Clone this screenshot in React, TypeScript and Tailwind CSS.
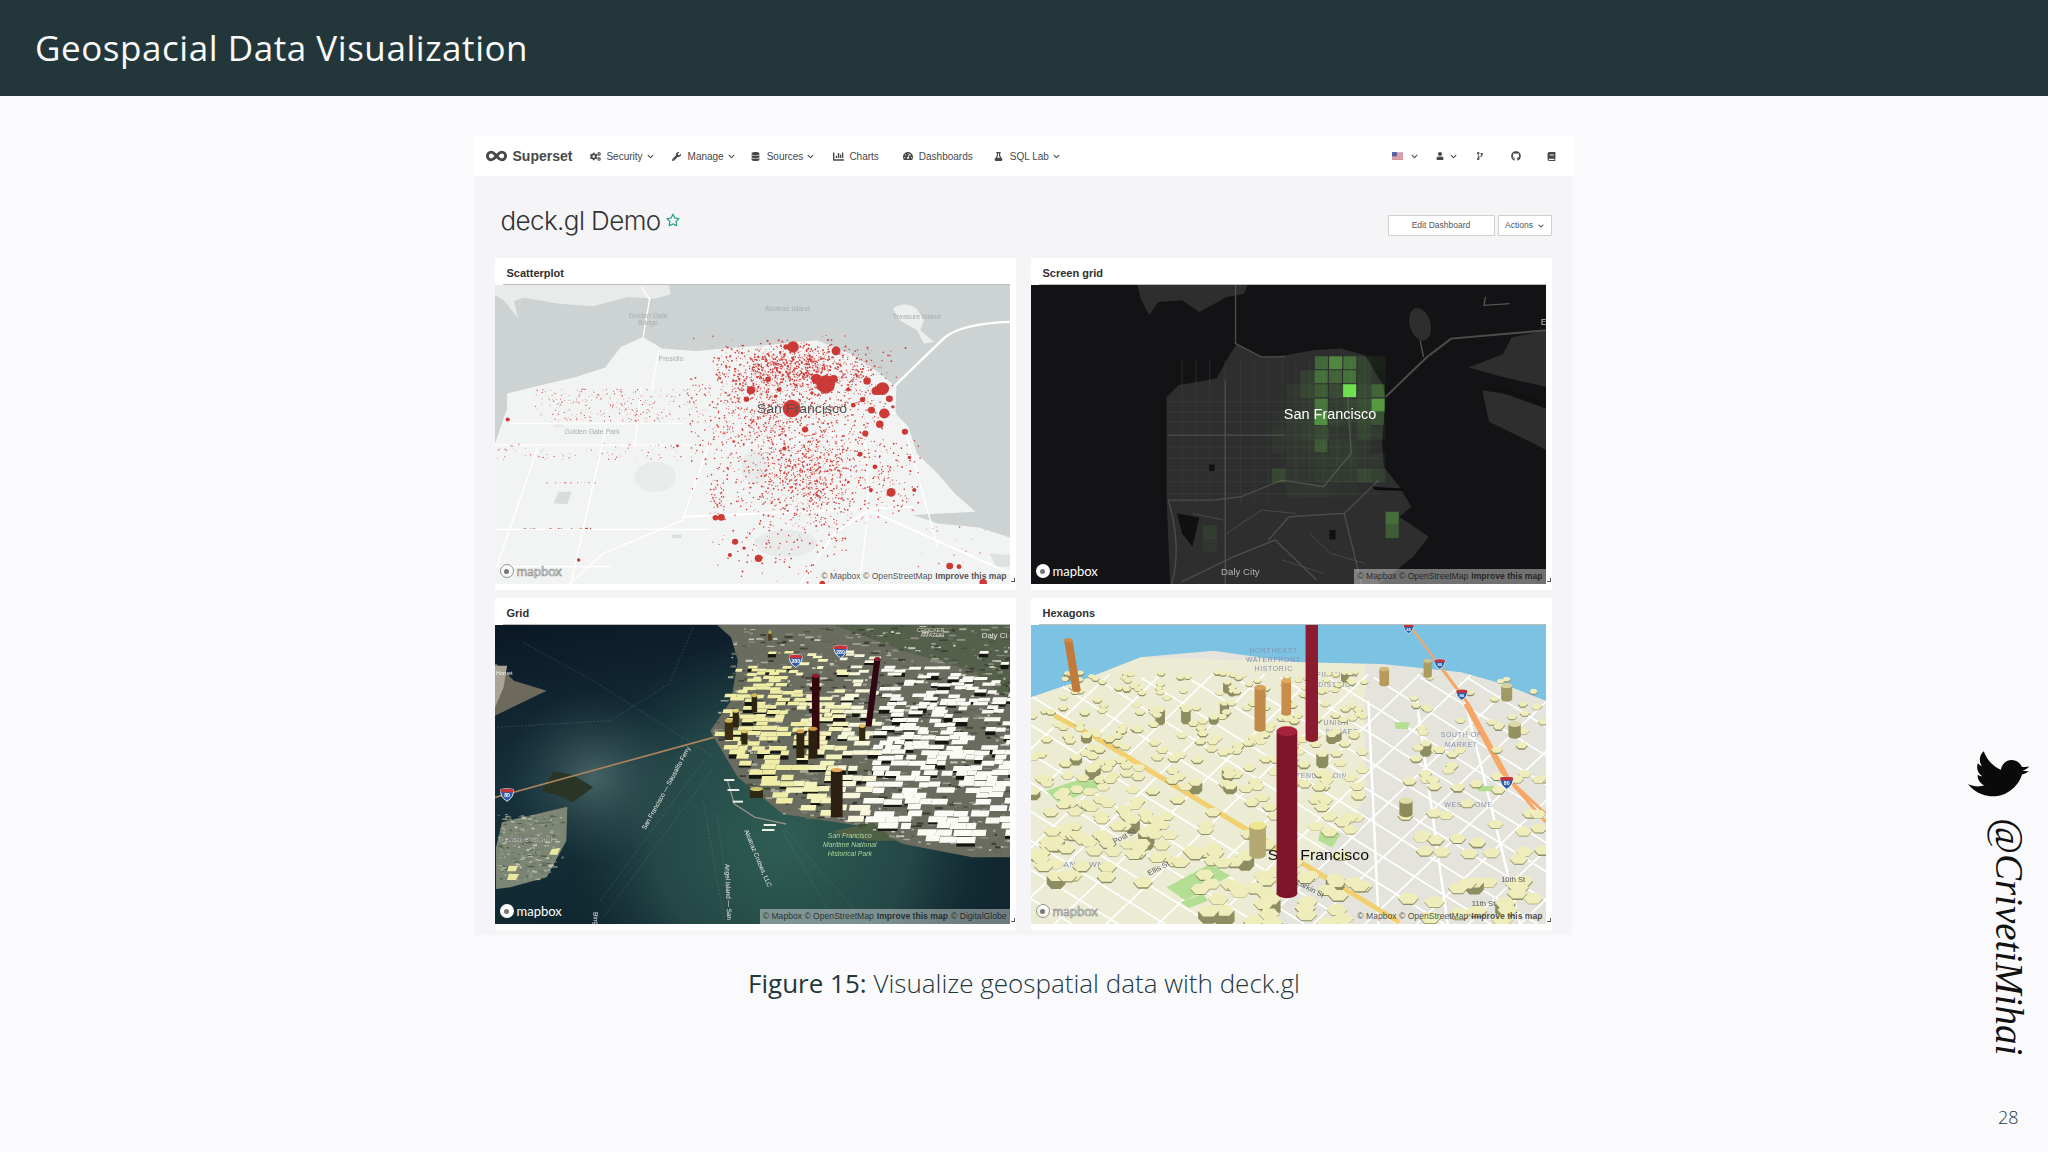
import type { ReactNode } from 'react'
import {
    FaBook,
    FaChartBar,
    FaChevronDown,
    FaCodeBranch,
    FaCogs,
    FaDatabase,
    FaFlask,
    FaGithub,
    FaRegStar,
    FaTachometerAlt,
    FaTwitter,
    FaUser,
    FaWrench,
} from 'react-icons/fa'

// small seeded random so the maps draw the same every time
function makeRng(seed: number) {
    let a = seed
    return () => {
        a = (a + 0x6d2b79f5) | 0
        let t = Math.imul(a ^ (a >>> 15), 1 | a)
        t = (t + Math.imul(t ^ (t >>> 7), 61 | t)) ^ t
        return ((t ^ (t >>> 14)) >>> 0) / 4294967296
    }
}

function gauss(r: () => number) {
    return (r() + r() + r() + r() - 2) / 0.58
}

type Dot = { x: number; y: number; r: number }

const scatterDots: Dot[] = (() => {
    const r = makeRng(7)
    const dots: Dot[] = []
    const add = (x: number, y: number, size = 1) => dots.push({ x, y, r: (1.1 + r() * 1.7) * size })
    for (let i = 0; i < 1500; i++) {
        const x = 860 + gauss(r) * 170
        const y = 400 + gauss(r) * 120
        if (y > 195 && x < 1170 && x > 580 && !(x < 660 && y < 280)) add(x, y)
    }
    for (let i = 0; i < 800; i++) add(880 + gauss(r) * 110, 270 + gauss(r) * 38, 1.1)
    for (let i = 0; i < 650; i++) add(930 + gauss(r) * 90, 610 + gauss(r) * 65)
    for (let i = 0; i < 140; i++) add(850 + gauss(r) * 100, 780 + gauss(r) * 70)
    for (let i = 0; i < 300; i++) add(130 + r() * 470, 325 + r() * 100, 0.7)
    for (let i = 0; i < 80; i++) add(20 + r() * 560, 490 + r() * 50, 0.7)
    for (let i = 0; i < 24; i++) add(95 + r() * 210, 745, 0.7)
    for (let i = 0; i < 14; i++) add(150 + r() * 170, 608, 0.7)
    for (let i = 0; i < 90; i++) add(1120 + r() * 130, 480 + r() * 220)
    for (let i = 0; i < 50; i++) add(640 + r() * 40, 600 + r() * 120)
    for (let i = 0; i < 18; i++) add(1240 + r() * 200, 740 + r() * 150, 0.8)
    return dots
})()

const scatterBlobs = [
    [880, 200, 17], [860, 200, 8], [1005, 212, 13], [975, 312, 27], [948, 296, 15], [998, 296, 12], [876, 385, 26],
    [1095, 302, 11], [1140, 325, 19], [1120, 332, 12], [1145, 400, 15], [1108, 390, 10], [1160, 356, 10],
    [1132, 432, 11], [1082, 358, 8], [758, 330, 12], [745, 357, 8], [808, 297, 8], [915, 448, 9], [1090, 460, 9],
    [1205, 455, 9], [1075, 522, 7], [1118, 560, 7], [1165, 637, 13], [1106, 630, 6], [655, 713, 8], [672, 712, 10],
    [712, 785, 9], [738, 804, 5], [697, 825, 6], [780, 835, 11], [1335, 858, 10], [1362, 860, 7], [1432, 908, 11],
    [965, 910, 8], [258, 840, 5], [52, 418, 6], [545, 497, 4], [708, 484, 4], [855, 505, 6], [1232, 630, 6], [1218, 532, 5],
    [840, 328, 7], [1040, 328, 6], [935, 338, 5], [830, 348, 5], [1055, 375, 7], [1130, 335, 9], [1170, 380, 5],
]

function ScatterMap() {
    return (
        <svg viewBox="15 14 1495 898" preserveAspectRatio="none" className="block h-full w-full blur-[0.4px]">
            <rect x="15" y="14" width="1495" height="898" fill="#cdd2d2" />
            <path
                d="M15 912V490L50 385V340L120 322 250 290 335 262 380 200 445 170 500 205 600 212 680 205 800 195 950 180 1050 222 1120 270 1180 320 1178 400 1215 440 1240 520 1300 580 1350 640 1410 695 1230 705 1300 730 1420 742 1510 772V912Z"
                fill="#f2f3f3"
            />
            <path d="M15 14H520L525 42 480 55 400 50 300 78 200 70 100 52 70 62 82 112 40 60 15 45Z" fill="#e9ebeb" />
            <path d="M1170 85Q1200 60 1240 85L1260 120 1250 150 1290 185 1260 190 1240 150 1190 120Z" fill="#edefef" />
            <path d="M1450 820 1510 825V860L1470 860Z" fill="#dfe2e2" />
            <g fill="#e9eaea">
                <path d="M185 670 200 635H238L225 672Z" fill="#d9dcdc" />
                <rect x="185" y="432" width="30" height="10" />
                <ellipse cx="480" cy="590" rx="60" ry="45" />
                <ellipse cx="860" cy="790" rx="90" ry="40" />
                <ellipse cx="770" cy="560" rx="40" ry="50" />
                <rect x="530" y="764" width="26" height="10" fill="#dadddd" />
            </g>
            <g stroke="#ffffff" fill="none" strokeWidth="4">
                <path d="M445 170 465 50M440 20 465 60" />
                <path d="M1172 320 1320 172Q1370 130 1510 125" strokeWidth="7" />
                <path d="M15 495H580M60 430 560 430M15 748H640M15 860H350" />
                <path d="M340 430 235 912M140 500 20 860M440 320 420 500M490 210 470 330" />
                <path d="M1090 480Q1110 700 1070 912M1200 430 1300 800M640 480 560 720 330 820 230 912" />
                <path d="M560 710 1230 680M900 912 1000 760 1100 690M1100 690 1510 880" strokeWidth="6" />
                <path d="M660 300 1180 400M700 500 1080 450" strokeWidth="3" />
            </g>
            {scatterDots.map((d, i) => (
                <circle key={i} cx={d.x} cy={d.y} r={d.r} fill="#d0403c" />
            ))}
            {scatterBlobs.map(([x, y, r], i) => (
                <circle key={i} cx={x} cy={y} r={r} fill="#cb3a36" />
            ))}
            <text x="775" y="398" fontSize="41" fill="#4f5556">San Francisco</text>
            <g fill="#a8adad" fontSize="20">
                <text x="217" y="463">Golden Gate Park</text>
                <text x="490" y="243">Presidio</text>
                <text x="798" y="93">Alcatraz Island</text>
                <text x="1170" y="115">Treasure Island</text>
                <text x="403" y="112">Golden Gate</text>
                <text x="430" y="135">Bridge</text>
            </g>
        </svg>
    )
}

// opacity of each cell, one row per entry: [y, first x, ...values]
const screenCells: number[][] = [
    [228, 855, 0.32, 0.5, 0.38, 0.12, 0.07],
    [270, 813, 0.1, 0.38, 0.3, 0.38, 0.12, 0.05],
    [312, 772, 0.05, 0.14, 0.26, 0.16, 1, 0.16, 0.3],
    [355, 772, 0.04, 0.07, 0.4, 0.08, 0.12, 0.18, 0.6],
    [396, 730, 0.03, 0.07, 0.09, 0.55, 0.1, 0.08, 0.14, 0.2],
    [437, 730, 0.05, 0.07, 0.1, 0.16, 0.05, 0.05, 0.13, 0.07],
    [478, 730, 0.04, 0.06, 0.07, 0.24, 0.08, 0.07, 0.05],
    [520, 772, 0.06, 0.06, 0.08, 0.08, 0.08, 0.06, 0.06],
    [565, 730, 0.14, 0.06, 0.05, 0.08, 0.08, 0.08, 0.14, 0.1],
    [610, 772, 0.04, 0.05, 0.05, 0.03, 0.03],
    [695, 1060, 0.36],
    [735, 1060, 0.26],
    [735, 530, 0.08],
    [775, 530, 0.05],
]

function ScreenGridMap() {
    const across = [365, 395, 425, 465, 500, 535, 570, 605, 640]
    const down = [470, 510, 550, 595, 640, 680, 720, 760, 800, 840, 880, 920, 960, 1000]
    return (
        <svg viewBox="32 14 1493 898" preserveAspectRatio="none" className="block h-full w-full blur-[0.4px]">
            <rect x="32" y="14" width="1493" height="898" fill="#131315" />
            <g fill="#2e2e2f">
                <path d="M435 912 425 650V350L460 315 570 295 610 220 630 190 700 230 770 225 850 210 930 205 1000 225 1050 310 1060 350 1050 480 1055 560 1100 620 1135 680 1100 710 1185 770 1140 830 1080 880 1040 912Z" />
                <path d="M340 14H660L650 40 600 50 520 95 470 60 400 65 375 105 350 55Z" />
                <ellipse cx="1160" cy="132" rx="30" ry="50" transform="rotate(-15 1160 132)" />
                <path d="M1300 262 1400 222 1425 172 1525 150V510L1490 490 1360 425 1340 330 1430 345 1525 380V320L1400 290Z" />
            </g>
            <g stroke="#414142" strokeWidth="1.6" fill="none">
                {across.map(y => (
                    <path key={y} d={`M430 ${y}H1045`} />
                ))}
                {down.map(x => (
                    <path key={x} d={`M${x} 240V${x < 760 ? 680 : 610}`} />
                ))}
                <g strokeWidth="4" stroke="#4d4d4e">
                    <path d="M625 14V190L700 230 770 230M430 465H770M595 300V912" />
                    <path d="M1060 350 1180 230 1250 175 1420 160 1525 150" strokeWidth="6" />
                    <path d="M430 660H560L640 650 760 600 880 620 960 520 950 350" />
                    <path d="M430 660Q470 800 440 912M940 700 990 912M470 905 620 830 740 780 860 900M720 780 780 710 940 700 1040 600" />
                    <path d="M600 760 700 690 800 700M840 760 900 820 1000 850M500 700 590 720M760 840 880 880" strokeWidth="2.5" />
                </g>
                <path d="M1350 50 1345 75 1420 70M1160 180 1170 230" strokeWidth="4" stroke="#555" />
            </g>
            <path d="M455 700 520 712 500 800 470 760Z" fill="#101011" />
            <rect x="897" y="750" width="18" height="28" fill="#111" />
            <rect x="548" y="553" width="16" height="20" fill="#111" />
            <path d="M1020 620 1110 625 1110 632 1030 630Z" fill="#0c0c0d" />
            <path d="M1350 305 1525 370V385L1350 320Z" fill="#111" />
            {screenCells.flatMap(([y, x, ...cells]) =>
                cells.map((o, i) => (
                    <rect
                        key={`${y}-${i}`}
                        x={x + i * 41.2}
                        y={y}
                        width={o < 0.2 ? 41.2 : 38}
                        height={o < 0.2 ? 42 : 39}
                        fill="#6fe04f"
                        opacity={o}
                    />
                )),
            )}
            <text x="765" y="416" fontSize="42" fill="#ffffff">San Francisco</text>
            <text x="583" y="885" fontSize="28" fill="#b4b4b4">Daly City</text>
            <text x="1510" y="135" fontSize="28" fill="#b4b4b4">E</text>
        </svg>
    )
}

function Shield({ x, y, label, size = 1 }: { x: number; y: number; label: string; size?: number }) {
    return (
        <g transform={`translate(${x} ${y}) scale(${size})`}>
            <path d="M-18-16Q0-20 18-16 22 6 0 20-22 6-18-16Z" fill="#2c5ea8" stroke="#fff" strokeWidth="2.5" />
            <path d="M-18-16Q0-20 18-16L19-7H-19Z" fill="#c8323a" />
            <text x="0" y="8" textAnchor="middle" fontSize="15" fontWeight="700" fill="#fff">{label}</text>
        </g>
    )
}

// coast of the city in the satellite map
function coastY(x: number) {
    if (x < 720) return 410 + (x - 650) * 1.7
    if (x < 850) return 530 + (x - 720) * 0.85
    if (x < 1100) return 640 + (x - 850) * 0.16
    if (x < 1200) return 680 + (x - 1100) * 0.5
    return 730 + (x - 1200) * 0.1
}

function leftY(y: number) {
    return y < 400 ? 710 - (y - 110) * 0.22 : 650 + (y - 400) * 0.6
}

type Cell = { x: number; y: number; w: number; h: number; side: number; fill: string }

const satelliteCells: Cell[] = (() => {
    const r = makeRng(21)
    const cells: Cell[] = []
    let y = 150
    while (y < 765) {
        const t = (y - 110) / 640
        const h = 7 + t * 13
        const w = 22 + t * 20
        let x = leftY(y) + r() * w
        while (x < 1510) {
            const cw = w * (0.7 + r() * 0.9)
            // fewer cells higher up the hill and far to the right
            let keep = y < 190 ? 0.16 : y < 260 ? 0.36 : 0.62
            if (x > 1350 && y < 420) keep *= 0.55
            if (y + h < coastY(x) && r() < keep) {
                const warm = Math.min(1, (x - 660) / 560 + (y > 540 ? 0.05 : 0))
                const fill = warm < 0.4 ? '#efeda6' : warm < 0.62 ? '#f5f3bd' : warm < 0.8 ? '#f8f7dc' : '#fbfbf6'
                cells.push({
                    x,
                    y: y + (r() - 0.5) * 6,
                    w: cw,
                    h,
                    side: r() < 0.3 ? 5 + r() * 9 : 0,
                    fill,
                })
            }
            x += cw + (r() < 0.3 ? r() * w * 0.5 : 0)
        }
        y += h + 1
    }
    return cells
})()

// rough satellite texture under the cells
const satelliteSpecks = (() => {
    const r = makeRng(33)
    const tones = ['#3a3b34', '#8a8b80', '#6e7064', '#a9a99c', '#404a36', '#5e6a54', '#c7c6ba']
    const islandTones = ['#8d9482', '#a5aa9a', '#6f7a66', '#c2c4b6', '#545f4e']
    const list: { x: number; y: number; w: number; h: number; fill: string }[] = []
    for (let i = 0; i < 1400; i++) {
        const x = 640 + r() * 870
        const y = 75 + r() * 700
        if (y < coastY(x) && x > leftY(y)) {
            list.push({ x, y, w: 4 + r() * 22, h: 2 + r() * 5, fill: tones[Math.floor(r() * tones.length)] })
        }
    }
    for (let i = 0; i < 260; i++) {
        const x = 22 + r() * 190
        const y = 640 + r() * 200
        if (y < 860 - (x > 100 ? (x - 100) * 0.7 : 0)) {
            list.push({ x, y, w: 3 + r() * 12, h: 2 + r() * 4, fill: islandTones[Math.floor(r() * islandTones.length)] })
        }
    }
    return list
})()

const gridColumns = [
    { x: 935, top: 225, bottom: 445, w: 22, lean: 0, body: '#34070f', cap: '#8c1c2d' },
    { x: 1090, top: 175, bottom: 378, w: 18, lean: -26, body: '#2e0811', cap: '#8c1c2d' },
    { x: 990, top: 508, bottom: 650, w: 34, lean: 0, body: '#2d2012', cap: '#e7a95c' },
    { x: 890, top: 392, bottom: 472, w: 23, lean: 0, body: '#30260f', cap: '#d6a44e' },
    { x: 925, top: 384, bottom: 474, w: 26, lean: 0, body: '#2c2010', cap: '#cf953f' },
    { x: 1072, top: 375, bottom: 420, w: 18, lean: 0, body: '#33290f', cap: '#e1c561' },
    { x: 682, top: 360, bottom: 418, w: 24, lean: 0, body: '#3a2e13', cap: '#cfb055' },
    { x: 730, top: 392, bottom: 432, w: 18, lean: 0, body: '#2f2610', cap: '#dfc86b' },
    { x: 760, top: 284, bottom: 335, w: 16, lean: 0, body: '#2f2610', cap: '#d3bb5b' },
    { x: 705, top: 330, bottom: 380, w: 18, lean: 0, body: '#2f2610', cap: '#e5d874' },
    { x: 808, top: 95, bottom: 120, w: 10, lean: 0, body: '#4a3d1a', cap: '#b8a253' },
    { x: 755, top: 565, bottom: 592, w: 38, lean: 0, body: '#2d2a14', cap: '#cfc56b' },
]

function GridMap() {
    return (
        <svg viewBox="15 73 1495 897" preserveAspectRatio="none" className="block h-full w-full blur-[0.4px]">
            <defs>
                <radialGradient id="seaGlow" gradientUnits="userSpaceOnUse" cx="850" cy="720" r="620">
                    <stop offset="0" stopColor="#2f5e54" />
                    <stop offset="0.6" stopColor="#2a4f4c" stopOpacity="0.8" />
                    <stop offset="1" stopColor="#1c3a3f" stopOpacity="0" />
                </radialGradient>
                <radialGradient id="seaHaze" gradientUnits="userSpaceOnUse" cx="300" cy="530" r="260">
                    <stop offset="0" stopColor="#6d8a86" stopOpacity="0.55" />
                    <stop offset="1" stopColor="#3a5a5a" stopOpacity="0" />
                </radialGradient>
                <linearGradient id="seaDeep" x1="0" y1="0" x2="0.3" y2="1">
                    <stop offset="0" stopColor="#0b1826" />
                    <stop offset="0.5" stopColor="#15303a" />
                    <stop offset="1" stopColor="#10272f" />
                </linearGradient>
            </defs>
            <rect x="15" y="73" width="1495" height="897" fill="url(#seaDeep)" />
            <rect x="15" y="73" width="1495" height="897" fill="url(#seaGlow)" />
            <rect x="15" y="73" width="1495" height="897" fill="url(#seaHaze)" />
            <path d="M15 345 165 270 70 240 20 190H15Z" fill="#6d6a5c" />
            <path d="M15 195H50L40 260 15 320Z" fill="#a9a596" />
            <path d="M150 570 185 512 240 522 300 560 240 605 200 585Z" fill="#2a3427" />
            <path d="M18 740 35 665 225 618 222 720 165 830 60 860 18 865Z" fill="#7d8675" />
            <path d="M660 73H1510V770L1400 770 1200 730 1100 680 850 640 720 530 650 410 640 390 700 300 720 180 700 110Z" fill="#6a6c60" />
            <path d="M1000 73H1510V300L1400 210 1200 150Z" fill="#55604a" />
            <path d="M1000 690 1110 665 1180 720 1100 720 1000 700Z" fill="#4e5f45" />
            {satelliteSpecks.map((s, i) => (
                <rect key={i} x={s.x} y={s.y} width={s.w} height={s.h} fill={s.fill} />
            ))}
            <path d="M15 590 650 410" stroke="#a9825e" strokeWidth="5" />
            <g stroke="#7ba096" strokeWidth="1.2" strokeDasharray="5 5" fill="none" opacity="0.7">
                <path d="M95 125 300 240 650 470" />
                <path d="M590 80 520 250 350 360 20 380" />
                <path d="M620 480 320 900M650 500 330 950" />
                <path d="M660 640 700 960M620 600 680 960" />
                <path d="M860 690 1060 930M850 690 1000 960" />
            </g>
            <path d="M690 540 710 610 770 650 860 670" fill="none" stroke="#8f8f88" strokeWidth="4" />
            <g fill="#e8efe6">
                <rect x="680" y="535" width="30" height="6" />
                <rect x="690" y="565" width="34" height="6" />
                <rect x="705" y="600" width="30" height="6" />
                <rect x="795" y="670" width="36" height="6" />
                <rect x="790" y="685" width="36" height="6" />
            </g>
            {satelliteCells.map((c, i) => (
                <g key={i}>
                    {c.side > 0 && (
                        <path
                            d={`M${c.x} ${c.y + c.h}H${c.x + c.w}V${c.y + c.h + c.side}H${c.x}Z`}
                            fill="#161610"
                        />
                    )}
                    <path d={`M${c.x + 3} ${c.y}H${c.x + c.w + 3}L${c.x + c.w} ${c.y + c.h}H${c.x}Z`} fill={c.fill} />
                </g>
            ))}
            <g fill="#e9e7a0">
                <path d="M180 745 205 742 195 762 172 762Z" />
                <path d="M55 795 82 795 75 812 50 812Z" />
                <path d="M55 820 85 820 76 838 50 838Z" />
            </g>
            {gridColumns.map((c, i) => (
                <g key={i}>
                    <path
                        d={`M${c.x} ${c.bottom}H${c.x + c.w}L${c.x + c.w - c.lean} ${c.top}H${c.x - c.lean}Z`}
                        fill={c.body}
                    />
                    <ellipse cx={c.x - c.lean + c.w / 2} cy={c.top} rx={c.w / 2} ry="6" fill={c.cap} />
                </g>
            ))}
            <Shield x={50} y={582} label="80" />
            <Shield x={888} y={180} label="280" />
            <Shield x={1018} y={152} label="280" />
            <g fontSize="23">
                <text x="22" y="723" fill="#e6e8df" stroke="#333" strokeWidth="0.6">Treasure Island</text>
                <text x="1428" y="112" fill="#e6e6dd">Daly Ci</text>
                <text x="1240" y="95" fontSize="16" fill="#d7d7cb">CROCKER</text>
                <text x="1250" y="110" fontSize="16" fill="#d7d7cb">AMAZON</text>
                <text x="18" y="222" fontSize="16" fill="#f4f4ec">Hornet</text>
                <text x="1045" y="712" textAnchor="middle" fill="#a9d69a" fontStyle="italic" fontSize="20">San Francisco</text>
                <text x="1045" y="739" textAnchor="middle" fill="#a9d69a" fontStyle="italic" fontSize="20">Maritime National</text>
                <text x="1045" y="766" textAnchor="middle" fill="#a9d69a" fontStyle="italic" fontSize="20">Historical Park</text>
            </g>
            <g fontSize="19" fill="#f0f0ea">
                <text transform="translate(452 688) rotate(-62)">San Francisco — Sausalito Ferry</text>
                <text transform="translate(738 690) rotate(68)">Alcatraz Cruises, LLC</text>
                <text transform="translate(683 790) rotate(88)">Angel Island — San</text>
                <text transform="translate(300 935) rotate(86)">Bing</text>
            </g>
        </svg>
    )
}

type Hex = { x: number; y: number; r: number; h: number }

const hexes: Hex[] = (() => {
    const r = makeRng(5)
    const list: Hex[] = []
    for (let i = 0; i < 900 && list.length < 470; i++) {
        const x = 32 + r() * 1493
        const y = 215 + Math.pow(r(), 1.3) * 755
        if (x > 1010 && y > 560 && r() < 0.45) continue
        if (x > 1040 && y < 520 && r() < 0.55) continue
        if (x > 1000 && x < 1100) continue
        if (x < 330 && y > 830) continue
        if (y < 320 && x < 120) continue
        const size = 11 + ((y - 215) / 755) * 20
        const tall = r()
        list.push({ x, y, r: size, h: tall > 0.93 ? 14 + r() * 26 : 1 + r() * 4 })
    }
    return list.sort((a, b) => a.y - b.y)
})()

function hexTop(x: number, y: number, r: number) {
    const ry = r * 0.55
    return `M${x - r} ${y}L${x - r / 2} ${y - ry}H${x + r / 2}L${x + r} ${y}L${x + r / 2} ${y + ry}H${x - r / 2}Z`
}

function hexSide(x: number, y: number, r: number, h: number) {
    const ry = r * 0.55
    return `M${x - r} ${y}V${y + h}L${x - r / 2} ${y + ry + h}H${x + r / 2}L${x + r} ${y + h}V${y}Z`
}

const hexColumns = [
    { x: 152, w: 24, top: 118, bottom: 268, lean: 24, body: '#bf7a3c', cap: '#d08a4a' },
    { x: 680, w: 32, top: 260, bottom: 385, lean: 0, body: '#c08a4a', cap: '#d7a25d' },
    { x: 758, w: 28, top: 240, bottom: 338, lean: 0, body: '#c88d4a', cap: '#dfaa5f' },
    { x: 1042, w: 28, top: 205, bottom: 250, lean: 0, body: '#b59a5a', cap: '#d0b978' },
    { x: 1170, w: 24, top: 180, bottom: 225, lean: 0, body: '#a99d62', cap: '#cfc58c' },
    { x: 1395, w: 32, top: 255, bottom: 295, lean: 0, body: '#a09a66', cap: '#d8d49e' },
    { x: 1416, w: 36, top: 370, bottom: 405, lean: 0, body: '#96925f', cap: '#dcd9a4' },
    { x: 1100, w: 38, top: 600, bottom: 640, lean: 0, body: '#8d8b5c', cap: '#e1deaa' },
    { x: 665, w: 48, top: 675, bottom: 762, lean: 0, body: '#b3a871', cap: '#f0e690' },
    { x: 828, w: 36, top: 70, bottom: 415, lean: 0, body: '#8b1c30', cap: '#8b1c30' },
    { x: 744, w: 60, top: 392, bottom: 878, lean: 0, body: '#7d1528', cap: '#a8213a' },
]

function HexMap() {
    const streets: number[] = []
    for (let x = -1000; x < 1500; x += 135) streets.push(x)
    const cross: number[] = []
    for (let x = -500; x < 1600; x += 150) cross.push(x)
    return (
        <svg viewBox="32 73 1493 897" preserveAspectRatio="none" className="block h-full w-full blur-[0.4px]">
            <defs>
                <clipPath id="hexland">
                    <path d="M32 290 190 235 350 170 560 150 800 185 1050 190 1280 215 1400 250 1525 300V970H32Z" />
                </clipPath>
            </defs>
            <rect x="32" y="73" width="1493" height="897" fill="#7cc3e3" />
            <g clipPath="url(#hexland)">
                <rect x="32" y="100" width="1493" height="870" fill="#e4e4dc" />
                <path d="M32 290 350 170 1000 190 1000 600 700 970H32Z" fill="#ecebd3" />
                <g stroke="#ffffff" strokeWidth="5" fill="none">
                    {streets.map(x => (
                        <path key={x} d={`M${x} 230 ${x + 1150} 970`} />
                    ))}
                    {cross.map(x => (
                        <path key={x} d={`M${x} 970 ${x + 760} 220`} />
                    ))}
                    <path d="M1010 300 1040 970M1150 300 1240 970M1290 300 1450 970" strokeWidth="7" />
                </g>
                <g fill="#b5de95">
                    <path d="M75 570 190 530 235 555 115 610Z" />
                    <path d="M425 860 550 790 610 825 480 900Z" />
                    <path d="M465 905 530 880 545 900 490 922Z" />
                    <path d="M1085 365H1130L1125 385H1090Z" />
                    <path d="M1320 556H1395L1398 572H1330Z" />
                    <path d="M870 690 930 700 905 740 865 720Z" />
                </g>
                <path d="M100 345 210 405 1100 965" stroke="#f2cf6f" strokeWidth="15" fill="none" />
                <path d="M1130 75 1300 310 1420 540 1525 665M1290 310 1400 520 1525 640" stroke="#f6a766" strokeWidth="9" fill="none" />
            </g>
            <path d="M1130 75 1300 310" stroke="#f6a766" strokeWidth="6" />
            <g fill="#8991ae" fontSize="20" letterSpacing="2">
                <text x="665" y="157">NORTHEAST</text>
                <text x="655" y="184">WATERFRONT</text>
                <text x="680" y="210">HISTORIC</text>
                <text x="860" y="230">FINANCIAL</text>
                <text x="865" y="258">DISTRICT</text>
                <text x="880" y="372">UNION</text>
                <text x="885" y="400">SQUARE</text>
                <text x="1220" y="408">SOUTH OF</text>
                <text x="1232" y="438">MARKET</text>
                <text x="800" y="532">TENDERLOIN</text>
                <text x="1230" y="618">WEST COME</text>
                <text x="78" y="798" fontSize="24">JAPANTOWN</text>
            </g>
            {hexes.map((h, i) => (
                <g key={i}>
                    <path d={hexSide(h.x, h.y, h.r, h.h)} fill="#8d8d62" />
                    <path d={hexTop(h.x, h.y, h.r)} fill="#efedbb" />
                </g>
            ))}
            <g fill="#555" fontSize="22">
                <text transform="translate(275 730) rotate(-28)">Post St</text>
                <text transform="translate(375 825) rotate(-28)">Ellis St</text>
                <text x="1395" y="845">10th St</text>
                <text x="1310" y="915">11th St</text>
                <text transform="translate(800 850) rotate(28)">Larkin St</text>
            </g>
            <Shield x={1127} y={84} label="80" size={0.75} />
            <Shield x={1217} y={190} label="80" size={0.8} />
            <Shield x={1281} y={282} label="80" size={0.85} />
            <Shield x={1411} y={546} label="80" size={1} />
            <text x="718" y="777" fontSize="46" fill="#0c0c0c">San Francisco</text>
            {hexColumns.map((c, i) => (
                <g key={i}>
                    <path
                        d={`M${c.x} ${c.bottom}H${c.x + c.w}L${c.x + c.w - c.lean} ${c.top}H${c.x - c.lean}Z`}
                        fill={c.body}
                    />
                    <ellipse cx={c.x + c.w / 2} cy={c.bottom} rx={c.w / 2} ry={c.w / 4} fill={c.body} />
                    <ellipse cx={c.x - c.lean + c.w / 2} cy={c.top} rx={c.w / 2} ry={c.w / 4} fill={c.cap} />
                </g>
            ))}
        </svg>
    )
}

function MapboxLogo({ outlined }: { outlined?: boolean }) {
    return (
        <div className="absolute bottom-[6px] left-[5px] flex items-center gap-[3px]">
            <span
                className={
                    outlined
                        ? 'flex h-[14px] w-[14px] items-center justify-center rounded-full border border-[#8f9393] bg-white/50'
                        : 'flex h-[14px] w-[14px] items-center justify-center rounded-full bg-white'
                }
            >
                <span className="h-[5px] w-[5px] rounded-full bg-[#777]" />
            </span>
            <span
                className={
                    outlined
                        ? "font-['Lato',sans-serif] text-[13px] leading-none text-white [-webkit-text-stroke:0.7px_#8f9393]"
                        : "font-['Lato',sans-serif] text-[13px] leading-none text-white"
                }
            >
                mapbox
            </span>
        </div>
    )
}

function Attribution({ shaded, digitalGlobe }: { shaded?: boolean; digitalGlobe?: boolean }) {
    return (
        <div
            className={
                shaded
                    ? 'absolute bottom-0 right-0 flex h-[15px] items-center gap-[3px] whitespace-nowrap bg-white/40 px-[3px] text-[8.6px] text-black/70'
                    : 'absolute bottom-0 right-0 flex h-[15px] items-center gap-[3px] whitespace-nowrap px-[3px] text-[8.6px] text-black/70'
            }
        >
            <span>© Mapbox © OpenStreetMap</span>
            <span className="font-bold">Improve this map</span>
            {digitalGlobe && <span>© DigitalGlobe</span>}
        </div>
    )
}

function ChartCard({ title, children }: { title: string; children: ReactNode }) {
    return (
        <div className="relative h-[332px] w-[521px] bg-white">
            <div className="ml-[8px] mr-[6px] flex h-[27px] items-center border-b border-[#bcbcbc] pl-[4px] pt-[4px] text-[11px] font-bold text-[#2f2f2f]">
                {title}
            </div>
            <div className="relative h-[299px] w-[515px] overflow-hidden">{children}</div>
            <span className="absolute bottom-[8px] right-[1px] h-[4px] w-[4px] border-b border-r border-[#555]" />
        </div>
    )
}

function NavItem({ icon, label, caret, className }: { icon: ReactNode; label: string; caret?: boolean; className: string }) {
    return (
        <div className={`flex items-center ${className}`}>
            <span className="flex w-[16px] justify-start text-[#484848]">{icon}</span>
            <span>{label}</span>
            {caret && <FaChevronDown className="ml-[4px] text-[7px] text-[#484848]" />}
        </div>
    )
}

function Navbar() {
    return (
        <nav className="flex h-[40px] w-[1101px] items-center bg-white pl-[11px] text-[10px] text-[#484848]">
            <svg viewBox="0 0 24 12" className="h-[12px] w-[23px]" fill="none" stroke="#484848" strokeWidth="3">
                <path d="M6.5 2a4 4 0 1 0 0 8c2.6 0 3.7-2 5.5-4s2.9-4 5.5-4a4 4 0 1 1 0 8c-2.6 0-3.7-2-5.5-4s-2.9-4-5.5-4z" />
            </svg>
            <span className="ml-[5px] mr-[18px] text-[14px] font-bold">Superset</span>
            <NavItem icon={<FaCogs className="text-[11px]" />} label="Security" caret className="mr-[18px]" />
            <NavItem icon={<FaWrench className="text-[9px]" />} label="Manage" caret className="mr-[18px]" />
            <NavItem icon={<FaDatabase className="text-[9px]" />} label="Sources" caret className="mr-[19px] -ml-[2px]" />
            <NavItem icon={<FaChartBar className="text-[11px]" />} label="Charts" className="mr-[24px]" />
            <NavItem icon={<FaTachometerAlt className="text-[10px]" />} label="Dashboards" className="mr-[22px]" />
            <NavItem icon={<FaFlask className="text-[9px]" />} label="SQL Lab" caret className="-ml-[1px]" />
            <div className="ml-auto flex items-center pr-[19px] text-[10px]">
                <svg viewBox="0 0 20 14" className="h-[8px] w-[11px]">
                    <rect width="20" height="14" fill="#e9d5d8" />
                    <path d="M0 1.5H20M0 4.5H20M0 7.5H20M0 10.5H20M0 13H20" stroke="#c9656f" strokeWidth="1.4" />
                    <rect width="9" height="7.5" fill="#5162a3" />
                </svg>
                <FaChevronDown className="ml-[8px] text-[7px]" />
                <FaUser className="ml-[18px] text-[8px]" />
                <FaChevronDown className="ml-[6px] text-[7px]" />
                <FaCodeBranch className="ml-[19px] text-[8px]" />
                <FaGithub className="ml-[27px] text-[10px]" />
                <FaBook className="ml-[26px] text-[9px]" />
            </div>
        </nav>
    )
}

function Dashboard() {
    return (
        <div className="flex w-[1101px] flex-col font-['Liberation_Sans',Arial,sans-serif]">
            <Navbar />
            <div className="ml-[1px] mr-[3px] bg-[#f5f5f7] px-[20px] pb-[5px]">
                <div className="flex h-[82px] items-start justify-between">
                    <div className="ml-[6px] mt-[27px] flex h-[34px] items-center">
                        <h1 className="font-['Inter',sans-serif] text-[26px] font-light tracking-[-0.6px] text-[#333]">deck.gl Demo</h1>
                        <FaRegStar className="ml-[5px] text-[14px] text-[#1f9d86]" />
                    </div>
                    <div className="mt-[39px] flex gap-[3px] text-[8.5px] text-[#555]">
                        <button className="flex h-[21px] w-[107px] items-center justify-center rounded-[1px] border border-[#cfcfcf] bg-white">
                            Edit Dashboard
                        </button>
                        <button className="flex h-[21px] w-[54px] items-center justify-center gap-[5px] rounded-[1px] border border-[#cfcfcf] bg-white">
                            Actions
                            <FaChevronDown className="text-[6px]" />
                        </button>
                    </div>
                </div>
                <div className="grid grid-cols-[521px_521px] gap-x-[15px] gap-y-[8px]">
                    <ChartCard title="Scatterplot">
                        <ScatterMap />
                        <MapboxLogo outlined />
                        <Attribution />
                    </ChartCard>
                    <ChartCard title="Screen grid">
                        <ScreenGridMap />
                        <MapboxLogo />
                        <Attribution shaded />
                    </ChartCard>
                    <ChartCard title="Grid">
                        <GridMap />
                        <MapboxLogo />
                        <Attribution shaded digitalGlobe />
                    </ChartCard>
                    <ChartCard title="Hexagons">
                        <HexMap />
                        <MapboxLogo outlined />
                        <Attribution />
                    </ChartCard>
                </div>
            </div>
        </div>
    )
}

export default function App() {
    return (
        <div className="relative flex h-[1152px] w-[2048px] flex-col items-center overflow-hidden bg-[#fafafc] font-['Open_Sans',sans-serif]">
            <header className="flex h-[96px] w-full shrink-0 items-center bg-[#23373b] pl-[35px] text-[35px] tracking-[0.55px] text-[#fafafa]">
                Geospacial Data Visualization
            </header>
            <div className="mt-[40px]">
                <Dashboard />
            </div>
            <p className="mt-[28px] h-[40px] text-[26px] leading-[40px] text-[#23373b]">
                <span className="font-medium">Figure 15:</span> <span className="font-light">Visualize geospatial data with deck.gl</span>
            </p>

            {/* handle and page number sit in the slide margin */}
            <FaTwitter className="absolute left-[1972px] top-[751px] rotate-[20deg] text-[53px] text-[#0a0a0a]" />
            <span className="absolute left-[1989px] top-[818px] font-['Liberation_Serif',serif] text-[39px] italic leading-[40px] text-[#111] [writing-mode:vertical-rl]">
                @CrivetiMihai
            </span>
            <span className="absolute left-[1998px] top-[1105px] text-[18px] font-light leading-[24px] text-[#23373b]">28</span>
        </div>
    )
}
